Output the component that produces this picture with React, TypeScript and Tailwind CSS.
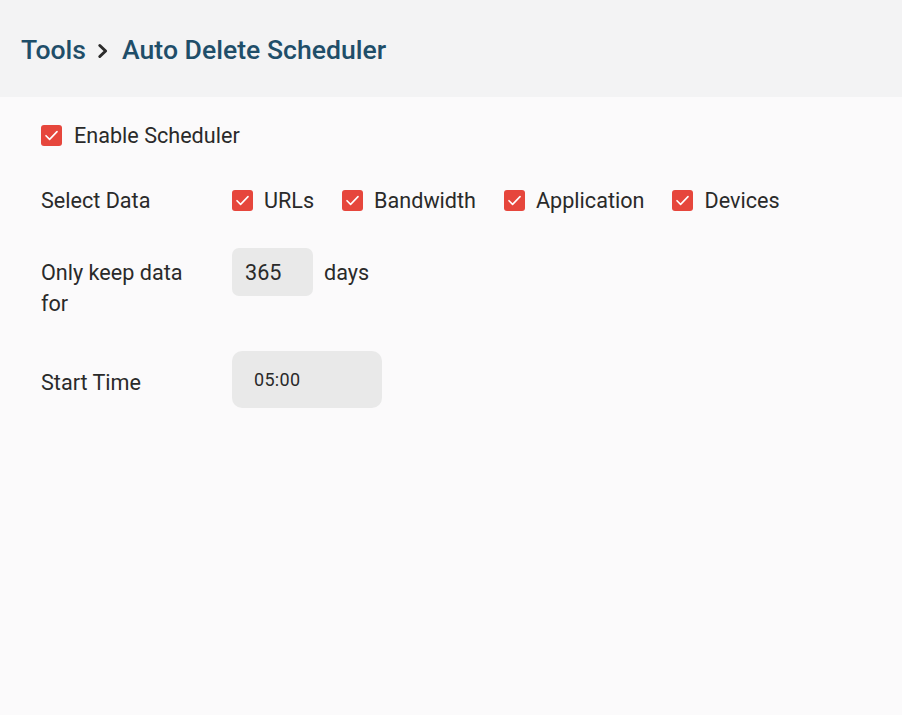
import { FunctionComponent } from "react";

const Check: FunctionComponent = () => (
  <span className="flex h-[21px] w-[21px] shrink-0 items-center justify-center rounded-[3px] bg-[#e6463c]">
    <svg width="17" height="17" viewBox="0 0 16 16" fill="none">
      <path
        d="M2.8 8.2l3.4 3.4L13.2 4.4"
        stroke="#fff"
        strokeWidth="1.5"
        strokeLinecap="round"
        strokeLinejoin="round"
      />
    </svg>
  </span>
);

const CheckItem: FunctionComponent<{ label: string }> = ({ label }) => (
  <label className="flex items-center gap-[11px]">
    <Check />
    <span>{label}</span>
  </label>
);

export default function App() {
  return (
    <div
      className="min-h-[715px] w-full bg-[#fbfafb] text-[21.6px] leading-[31px] text-[#2a2a2a]"
      style={{ fontFamily: "Roboto, 'Liberation Sans', sans-serif" }}
    >
      <header className="flex h-[97px] items-center bg-[#f3f3f4] px-[21px] pt-[1px]">
        <h1 className="flex items-center text-[26.6px] font-medium text-[#1f4e69]">
          <span>Tools</span>
          <svg width="14" height="18" viewBox="0 0 14 18" fill="none" className="ml-[10px] mr-[12px] mt-[3px]">
            <path
              d="M3.8 3.5L9.6 9 3.8 14.5"
              stroke="#2b2b2b"
              strokeWidth="3"
              strokeLinecap="round"
              strokeLinejoin="round"
            />
          </svg>
          <span>Auto Delete Scheduler</span>
        </h1>
      </header>

      <main className="flex flex-col px-[41px] pt-[18px]">
        <div className="flex h-[40px] items-center gap-[12px]">
          <Check />
          <span>Enable Scheduler</span>
        </div>

        <div className="mt-[25px] flex h-[40px] items-center">
          <span className="w-[191px] shrink-0">Select Data</span>
          <div className="flex items-center gap-[28px]">
            <CheckItem label="URLs" />
            <CheckItem label="Bandwidth" />
            <CheckItem label="Application" />
            <CheckItem label="Devices" />
          </div>
        </div>

        <div className="mt-[28px] flex items-start">
          <span className="w-[150px] shrink-0 pt-[9px]">Only keep data for</span>
          <div className="ml-[41px] flex items-center gap-[11px]">
            <div className="flex h-[48px] w-[81px] items-center rounded-[7px] bg-[#e9e9e9] pl-[13px]">
              365
            </div>
            <span>days</span>
          </div>
        </div>

        <div className="mt-[32px] flex items-center">
          <span className="w-[191px] shrink-0 pt-[5px]">Start Time</span>
          <div className="flex h-[57px] w-[150px] items-center rounded-[10px] bg-[#e9e9e9] pl-[22px] text-[18px] tracking-[0.3px]">
            05:00
          </div>
        </div>
      </main>
    </div>
  );
}
